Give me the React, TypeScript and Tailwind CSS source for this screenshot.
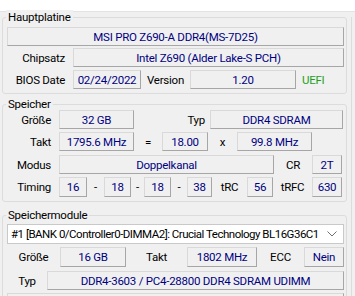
import React from "react";

type FP = { w: string; children?: React.ReactNode; extra?: string };

const Field = ({ w, children, extra = "" }: FP) => (
  <div
    className={`${w} h-full shrink-0 flex items-center justify-center border border-t-[#d9d9d9] border-l-[#d9d9d9] border-r-[#a6a6a6] border-b-[#a6a6a6] bg-[#f0f0f0] text-[#000080] whitespace-nowrap overflow-hidden ${extra}`}
  >
    {children}
  </div>
);

const Lbl = ({ w, children, extra = "" }: FP) => (
  <div className={`${w} h-full shrink-0 flex items-center whitespace-nowrap ${extra}`}>{children}</div>
);

const Group = ({ title, h, mt, children }: { title: string; h: string; mt: string; children: React.ReactNode }) => (
  <div className={`relative ${h} ${mt} border border-[#dcdcdc] rounded-[3px]`}>
    <div className="absolute left-[3px] top-[-8px] px-[2px] bg-[#f0f0f0] leading-[14px] text-black">{title}</div>
    {children}
  </div>
);

export default function App() {
  return (
    <div
      className="w-[355px] h-[296px] bg-[#f0f0f0] overflow-hidden text-[11.5px] tracking-[-0.25px] leading-[14px] text-black"
      style={{ fontFamily: "Roboto, 'Noto Sans', sans-serif" }}
    >
      <div className="h-[12px] bg-white border-b border-[#e3e3e3]" />
      <div className="flex">
        <div className="ml-[2px] w-[345px] flex flex-col">
          <Group title="Hauptplatine" h="h-[77px]" mt="mt-[5px]">
            <div className="flex flex-col pl-[4px] pr-[2px] pt-[9px]">
              <div className="h-[19px] flex">
                <Field w="w-[337px]" extra="border-b-[#6e6e6e]">MSI PRO Z690-A DDR4(MS-7D25)</Field>
              </div>
              <div className="h-[19px] mt-[2px] flex">
                <Lbl w="w-[62px]" extra="justify-end -ml-[4px]">Chipsatz</Lbl>
                <Field w="w-[271px]" extra="ml-[8px]">Intel Z690 (Alder Lake-S PCH)</Field>
              </div>
              <div className="h-[19px] mt-[3px] flex">
                <Lbl w="w-[62px]" extra="justify-end -ml-[4px]">BIOS Date</Lbl>
                <Field w="w-[68px]" extra="ml-[8px]">02/24/2022</Field>
                <Lbl w="w-[49px]" extra="justify-center">Version</Lbl>
                <Field w="w-[106px]">1.20</Field>
                <Lbl w="w-[40px]" extra="pl-[6px] text-[#1ea01e]">UEFI</Lbl>
              </div>
            </div>
          </Group>

          <Group title="Speicher" h="h-[98px]" mt="mt-[10px]">
            <div className="flex flex-col pt-[5px]">
              <div className="h-[19px] flex">
                <Lbl w="w-[48px]" extra="justify-end">Größe</Lbl>
                <Field w="w-[75px]" extra="ml-[8px]">32 GB</Field>
                <Lbl w="w-[76px]" extra="justify-end pr-[5px]">Typ</Lbl>
                <Field w="w-[133px]">DDR4 SDRAM</Field>
              </div>
              <div className="h-[19px] mt-[3px] flex">
                <Lbl w="w-[48px]" extra="justify-end">Takt</Lbl>
                <Field w="w-[75px]" extra="ml-[8px]">1795.6 MHz</Field>
                <Lbl w="w-[28px]" extra="justify-center">=</Lbl>
                <Field w="w-[46px]">18.00</Field>
                <Lbl w="w-[29px]" extra="justify-center">x</Lbl>
                <Field w="w-[75px]">99.8 MHz</Field>
              </div>
              <div className="h-[19px] mt-[4px] flex">
                <Lbl w="w-[48px]" extra="justify-end">Modus</Lbl>
                <Field w="w-[215px]" extra="ml-[8px]">Doppelkanal</Field>
                <Lbl w="w-[38px]" extra="justify-center">CR</Lbl>
                <Field w="w-[30px]">2T</Field>
              </div>
              <div className="h-[20px] mt-[3px] flex">
                <Lbl w="w-[48px]" extra="justify-end">Timing</Lbl>
                <Field w="w-[28px]" extra="ml-[8px]">16</Field>
                <Lbl w="w-[17px]" extra="justify-center">-</Lbl>
                <Field w="w-[27px]">18</Field>
                <Lbl w="w-[13px]" extra="justify-center">-</Lbl>
                <Field w="w-[27px]">18</Field>
                <Lbl w="w-[16px]" extra="justify-center">-</Lbl>
                <Field w="w-[25px]">38</Field>
                <Lbl w="w-[35px]" extra="justify-center">tRC</Lbl>
                <Field w="w-[26px]">56</Field>
                <Lbl w="w-[39px]" extra="justify-center">tRFC</Lbl>
                <Field w="w-[30px]">630</Field>
              </div>
            </div>
          </Group>

          <Group title="Speichermodule" h="h-[120px]" mt="mt-[13px]">
            <div className="flex flex-col pl-[4px] pt-[8px]">
              <div className="h-[20px] w-[337px] flex items-center bg-white border border-[#c9c9c9] pl-[3px] pr-[6px]">
                <span className="flex-1 whitespace-nowrap overflow-hidden tracking-[-0.5px]">
                  #1 [BANK 0/Controller0-DIMMA2]: Crucial Technology BL16G36C1
                </span>
                <svg width="10" height="6" viewBox="0 0 10 6" className="shrink-0 ml-[4px]">
                  <path d="M0.5 0.5 L5 5 L9.5 0.5" fill="none" stroke="#707070" strokeWidth="1" />
                </svg>
              </div>
              <div className="h-[20px] mt-[3px] flex">
                <Lbl w="w-[53px]" extra="justify-center">Größe</Lbl>
                <Field w="w-[66px]">16 GB</Field>
                <Lbl w="w-[61px]" extra="justify-center">Takt</Lbl>
                <Field w="w-[70px]">1802 MHz</Field>
                <Lbl w="w-[47px]" extra="justify-center">ECC</Lbl>
                <Field w="w-[40px]">Nein</Field>
              </div>
              <div className="h-[19px] mt-[4px] flex">
                <Lbl w="w-[40px]" extra="justify-center">Typ</Lbl>
                <Field w="w-[297px]">DDR4-3603 / PC4-28800 DDR4 SDRAM UDIMM</Field>
              </div>
              <div className="h-[19px] mt-[3px] flex">
                <Field w="w-[337px]"></Field>
              </div>
            </div>
          </Group>
        </div>
        <div className="ml-[4px] mt-[5px] w-px h-[290px] bg-[#dcdcdc]" />
      </div>
    </div>
  );
}
